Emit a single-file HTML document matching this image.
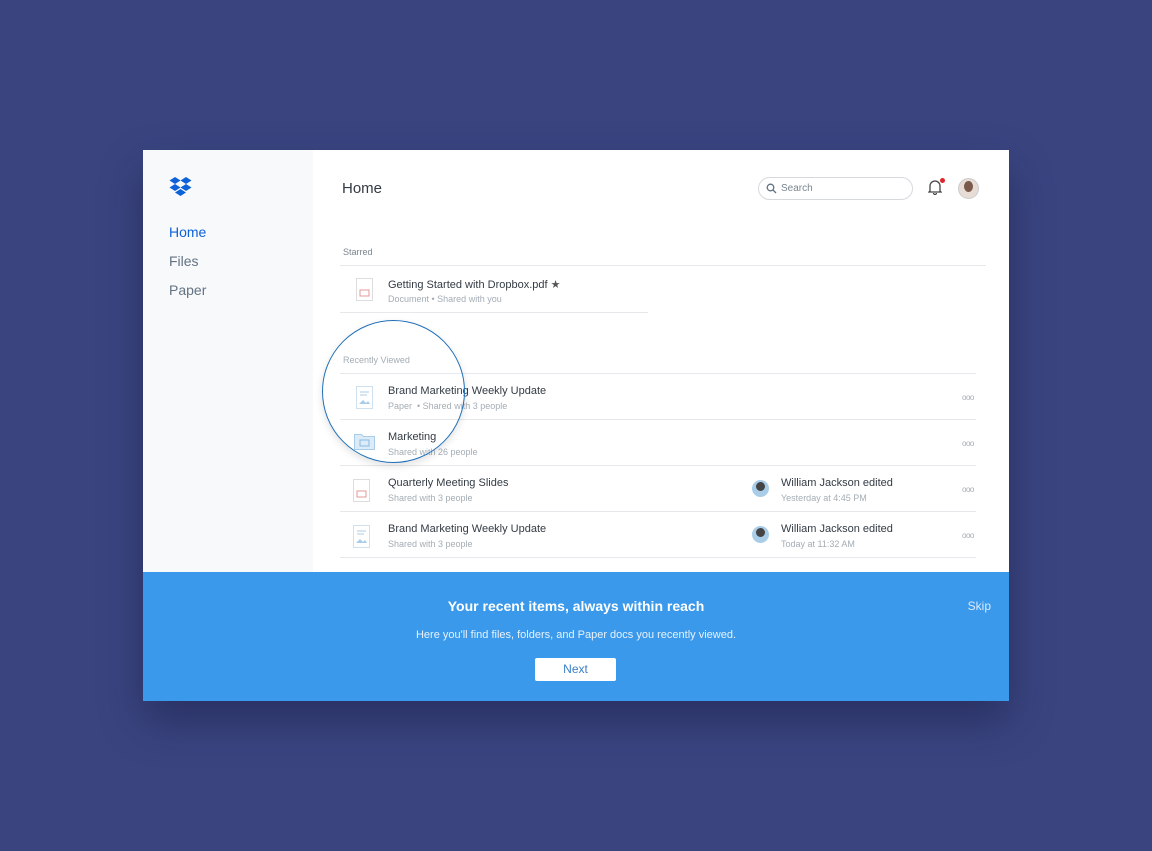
<!DOCTYPE html>
<html><head><style>
*{margin:0;padding:0;box-sizing:border-box}
body{width:1152px;height:851px;background:#3a4580;font-family:"Liberation Sans",sans-serif;position:relative;overflow:hidden}
.win{position:absolute;left:143px;top:150px;width:866px;height:551px;background:#fff;box-shadow:0 20px 40px rgba(20,25,60,.45)}
.side{position:absolute;left:0;top:0;width:170px;height:422px;background:#f7f9fa}
.a{position:absolute;white-space:nowrap}
.nav{font-size:14px;color:#637282;left:26px}
.t{font-size:11px;color:#333b44}
.s{font-size:9px;color:#a4adb5}
.line{position:absolute;height:1px;background:#e6e8eb}
.dots{position:absolute;font-size:8px;color:#a4adb5;letter-spacing:-.5px}
.av{position:absolute;width:17px;height:17px;border-radius:50%;background:#a9cde9;overflow:hidden}
.av:after{content:"";position:absolute;left:4px;top:2px;width:9px;height:9px;border-radius:50%;background:#444}
.banner{position:absolute;left:0;top:422px;width:866px;height:129px;background:#3a99ea;color:#fff;text-align:center}
</style></head><body>
<div class="win">
<div class="side">
<svg class="a" style="left:26px;top:27px" width="23" height="22" viewBox="0 0 23 22"><g fill="#0d61d9"><path d="M6 0l5.5 3.5L6 7 .5 3.5z"/><path d="M17 0l5.5 3.5L17 7l-5.5-3.5z"/><path d="M6 7l5.5 3.5L6 14 .5 10.5z"/><path d="M17 7l5.5 3.5L17 14l-5.5-3.5z"/><path d="M11.5 12l5.5 3.5-5.5 3.5L6 15.5z"/></g></svg>
<div class="a nav" style="top:74px;color:#0d61d9">Home</div>
<div class="a nav" style="top:103px">Files</div>
<div class="a nav" style="top:132px">Paper</div>
</div>
<div class="a" style="left:199px;top:30px;font-size:15px;color:#333b44">Home</div>
<div class="a" style="left:615px;top:27px;width:155px;height:23px;border:1px solid #d6dadd;border-radius:12px"></div>
<svg class="a" style="left:623px;top:33px" width="11" height="11" viewBox="0 0 11 11"><circle cx="4.5" cy="4.5" r="3.3" fill="none" stroke="#637282" stroke-width="1.3"/><path d="M7 7l3 3" stroke="#637282" stroke-width="1.3"/></svg>
<div class="a" style="left:638px;top:33px;font-size:10px;color:#7a858f">Search</div>
<svg class="a" style="left:785px;top:29px" width="14" height="16" viewBox="0 0 14 16"><path d="M2 12V7a5 5 0 0110 0v5l1 1H1z" fill="none" stroke="#444" stroke-width="1.3"/><path d="M5.5 14a1.5 1.5 0 003 0" fill="none" stroke="#444" stroke-width="1.2"/></svg>
<div class="a" style="left:797px;top:28px;width:5px;height:5px;border-radius:50%;background:#e0242b"></div>
<div class="a" style="left:815px;top:28px;width:21px;height:21px;border-radius:50%;background:#e8dcd6;border:1px solid #ccc"></div>
<div class="a" style="left:821px;top:31px;width:9px;height:11px;border-radius:50%;background:#7a5a4a"></div>

<div class="a" style="left:200px;top:97px;font-size:9px;color:#7a858f">Starred</div>
<div class="line" style="left:197px;top:115px;width:646px"></div>
<svg class="a" style="left:213px;top:128px" width="17" height="23"><rect x=".5" y=".5" width="16" height="22" fill="#fff" stroke="#ddd"/><rect x="4" y="12" width="9" height="6" fill="none" stroke="#e39a9a"/></svg>
<div class="a t" style="left:245px;top:128px">Getting Started with Dropbox.pdf <span style="color:#555">★</span></div>
<div class="a s" style="left:245px;top:144px">Document • Shared with you</div>
<div class="line" style="left:197px;top:162px;width:308px"></div>

<div class="a" style="left:200px;top:205px;font-size:9px;color:#a4adb5">Recently Viewed</div>
<div class="line" style="left:197px;top:223px;width:636px"></div>
<svg class="a" style="left:213px;top:236px" width="17" height="23"><rect x=".5" y=".5" width="16" height="22" fill="#fff" stroke="#cfe0ef"/><path d="M4 6h9M4 9h7" stroke="#a9cde9"/><path d="M3 18l4-4 3 3 2-2 2 3z" fill="#a9cde9"/></svg>
<div class="a t" style="left:245px;top:235px">Brand Marketing Weekly Update</div>
<div class="a s" style="left:245px;top:251px">Paper &nbsp;• Shared with 3 people</div>
<div class="dots" style="left:819px;top:243px">ooo</div>
<div class="line" style="left:197px;top:269px;width:636px"></div>
<svg class="a" style="left:211px;top:283px" width="21" height="17"><path d="M.5 1.5h7l2 2h11v13H.5z" fill="#dcebf8" stroke="#a9cde9"/><rect x="6" y="7" width="9" height="6" fill="none" stroke="#8ab8e0"/></svg>
<div class="a t" style="left:245px;top:281px">Marketing</div>
<div class="a s" style="left:245px;top:297px">Shared with 26 people</div>
<div class="dots" style="left:819px;top:289px">ooo</div>
<div class="line" style="left:197px;top:315px;width:636px"></div>
<svg class="a" style="left:210px;top:329px" width="17" height="23"><rect x=".5" y=".5" width="16" height="22" fill="#fff" stroke="#ddd"/><rect x="4" y="12" width="9" height="6" fill="none" stroke="#e39a9a"/></svg>
<div class="a t" style="left:245px;top:327px">Quarterly Meeting Slides</div>
<div class="a s" style="left:245px;top:343px">Shared with 3 people</div>
<div class="av" style="left:609px;top:330px"></div>
<div class="a t" style="left:638px;top:327px">William Jackson edited</div>
<div class="a s" style="left:638px;top:343px">Yesterday at 4:45 PM</div>
<div class="dots" style="left:819px;top:335px">ooo</div>
<div class="line" style="left:197px;top:361px;width:636px"></div>
<svg class="a" style="left:210px;top:375px" width="17" height="23"><rect x=".5" y=".5" width="16" height="22" fill="#fff" stroke="#cfe0ef"/><path d="M4 6h9M4 9h7" stroke="#a9cde9"/><path d="M3 18l4-4 3 3 2-2 2 3z" fill="#a9cde9"/></svg>
<div class="a t" style="left:245px;top:373px">Brand Marketing Weekly Update</div>
<div class="a s" style="left:245px;top:389px">Shared with 3 people</div>
<div class="av" style="left:609px;top:376px"></div>
<div class="a t" style="left:638px;top:373px">William Jackson edited</div>
<div class="a s" style="left:638px;top:389px">Today at 11:32 AM</div>
<div class="dots" style="left:819px;top:381px">ooo</div>
<div class="line" style="left:197px;top:407px;width:636px"></div>

<div class="a" style="left:179px;top:170px;width:143px;height:143px;border-radius:50%;border:1.5px solid #1f6fb8;box-shadow:0 3px 8px rgba(0,0,0,.12)"></div>

<div class="banner">
<div class="a" style="left:0;width:866px;top:26px;font-size:14px;font-weight:bold">Your recent items, always within reach</div>
<div class="a" style="right:18px;top:27px;font-size:12px;color:#dbeafb">Skip</div>
<div class="a" style="left:0;width:866px;top:57px;font-size:11px;color:#e8f2fc">Here you'll find files, folders, and Paper docs you recently viewed.</div>
<div class="a" style="left:392px;top:86px;width:81px;height:23px;background:#fff;border-radius:2px;color:#3a7fc8;font-size:12px;line-height:23px">Next</div>
</div>
</div>
</body></html>
